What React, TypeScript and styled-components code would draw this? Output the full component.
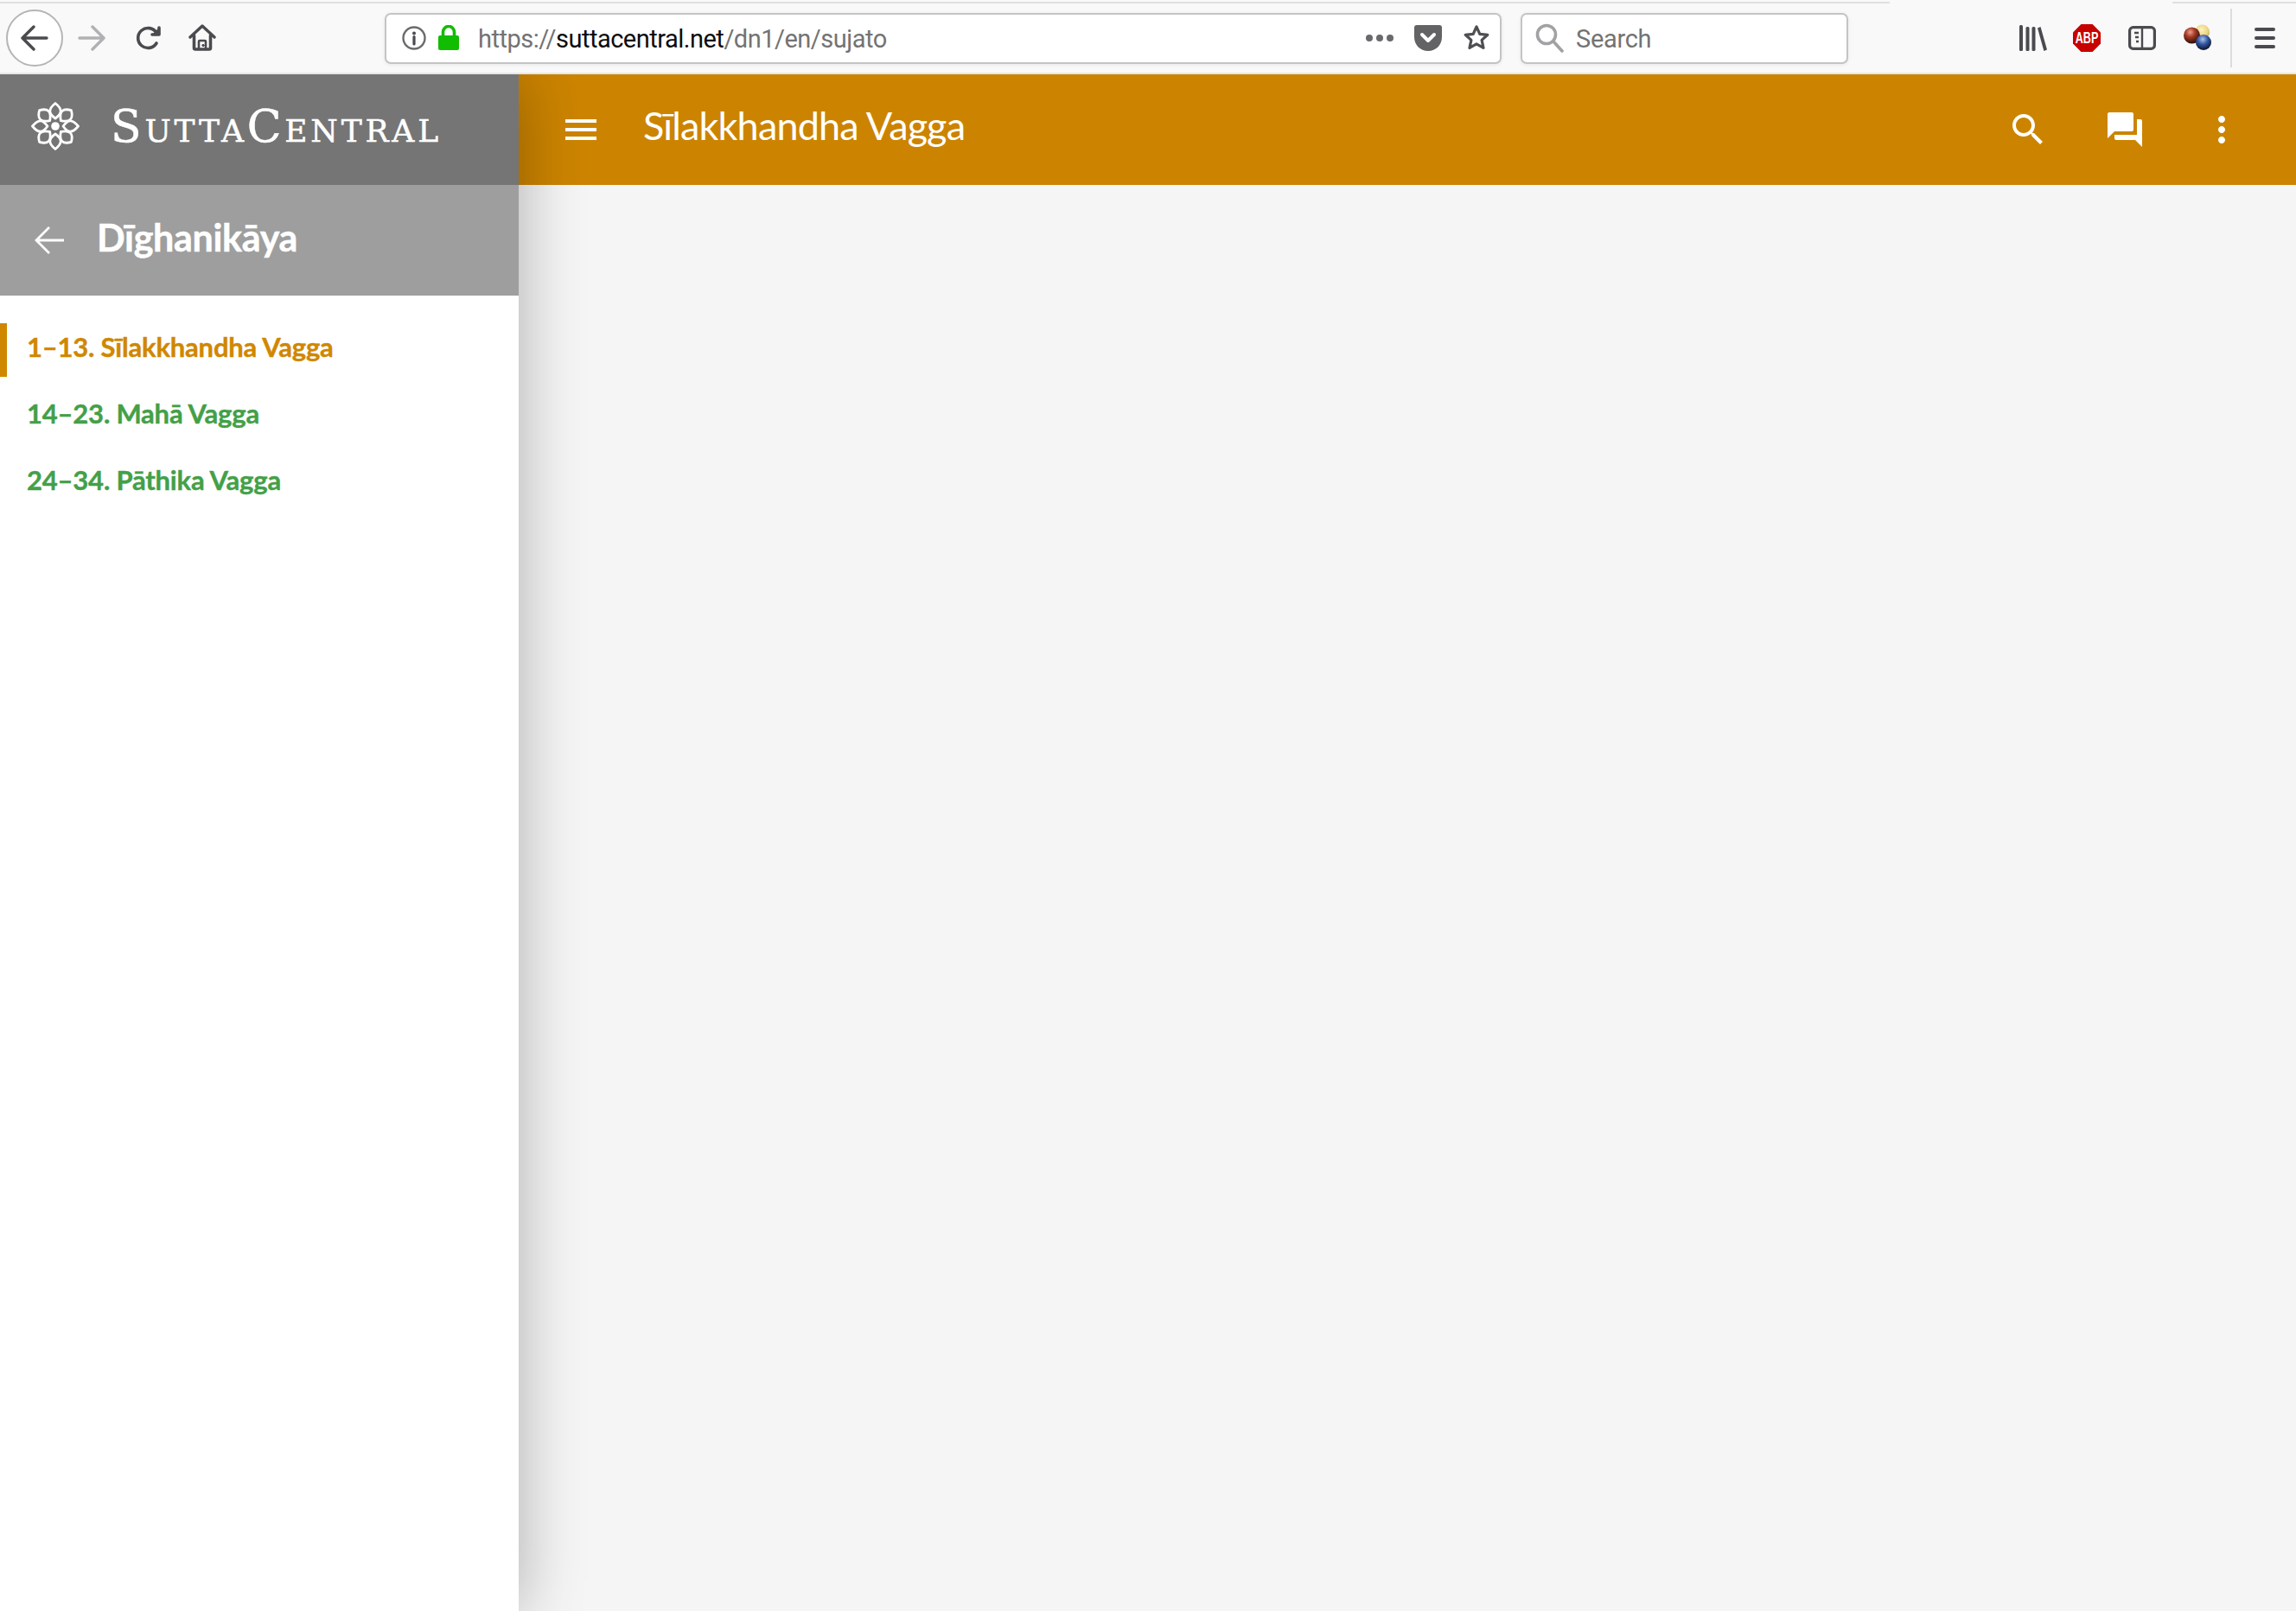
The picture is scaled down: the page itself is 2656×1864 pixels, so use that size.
import React from "react";
import { createGlobalStyle, styled } from "styled-components";

const GlobalStyle = createGlobalStyle`
  html, body {
    margin: 0;
    padding: 0;
    background: #f5f5f5;
  }
  * {
    box-sizing: border-box;
  }
`;

const diagonalPetals = [45, 135, 225, 315];
const cardinalPetals = [0, 90, 180, 270];
const menuItems = [
  { label: "1–13. Sīlakkhandha Vagga", active: true },
  { label: "14–23. Mahā Vagga", active: false },
  { label: "24–34. Pāthika Vagga", active: false },
];

const App = () => {
  return (
    <Page>
      <GlobalStyle />
      <BrowserChrome>
        <TopStrip>
          <TopLine $width={2186} />
          <TopLine $width={143} />
        </TopStrip>
        <ToolRow>
          <BackCircle>
            <svg width="32" height="30" viewBox="0 0 32 30" fill="none" stroke="#4a4a4f" strokeWidth="3.4" strokeLinecap="round" strokeLinejoin="round">
              <path d="M2 15h28M15 2L2 15l13 13" />
            </svg>
          </BackCircle>
          <ToolIcon $left={17}>
            <svg width="32" height="30" viewBox="0 0 32 30" fill="none" stroke="#b1b1b3" strokeWidth="3.4" strokeLinecap="round" strokeLinejoin="round">
              <path d="M2 15h28M17 2l13 13-13 13" />
            </svg>
          </ToolIcon>
          <ToolIcon $left={34}>
            <svg width="32" height="32" viewBox="0 0 32 32" fill="none" stroke="#4a4a4f" strokeWidth="3.6" strokeLinecap="round" strokeLinejoin="round">
              <path d="M25 22a11.5 11.5 0 1 1 0-12" />
              <path d="M28 4v8h-8" fill="#4a4a4f" />
            </svg>
          </ToolIcon>
          <ToolIcon $left={30}>
            <svg width="32" height="32" viewBox="0 0 32 32" fill="none" stroke="#4a4a4f" strokeWidth="3.4" strokeLinecap="round" strokeLinejoin="round">
              <path d="M2 15L16 2l14 13" />
              <path d="M6.5 13v14.5a1.500 1.500 0 0 0 1.500 1.500h16a1.500 1.500 0 0 0 1.500-1.500V13" strokeWidth="3.6" />
              <path d="M12 29v-9a1 1 0 0 1 1-1h6a1 1 0 0 1 1 1v9" strokeWidth="2.6" />
              <circle cx="17" cy="24.5" r="1.2" fill="#4a4a4f" strokeWidth="1" />
            </svg>
          </ToolIcon>
          <UrlBar>
            <FieldIcon $left={17}>
              <svg width="30" height="30" viewBox="0 0 30 30" fill="none">
                <circle cx="15" cy="15" r="12.5" stroke="#6b6b6b" strokeWidth="2.4" />
                <circle cx="15" cy="9.5" r="2" fill="#4a4a4f" />
                <path d="M15 13.5v8.5" stroke="#4a4a4f" strokeWidth="3.2" strokeLinecap="round" />
              </svg>
            </FieldIcon>
            <FieldIcon $left={12}>
              <svg width="26" height="30" viewBox="0 0 26 30" fill="none">
                <path d="M6.5 14V8a6.5 6.5 0 0 1 13 0v6" stroke="#12bc00" strokeWidth="3.6" />
                <rect x="1" y="12" width="24" height="17" rx="2" fill="#12bc00" />
              </svg>
            </FieldIcon>
            <UrlText>
              https://<UrlHost>suttacentral.net</UrlHost>/dn1/en/sujato
            </UrlText>
            <UrlActions>
              <svg width="32" height="8" viewBox="0 0 32 8" fill="#6a6a6e">
                <circle cx="4" cy="4" r="4" />
                <circle cx="16" cy="4" r="4" />
                <circle cx="28" cy="4" r="4" />
              </svg>
              <svg width="32" height="30" viewBox="0 0 32 30">
                <path d="M3 0h26a3 3 0 0 1 3 3v11c0 9-7 16-16 16S0 23 0 14V3a3 3 0 0 1 3-3z" fill="#636366" />
                <path d="M9 11l7 7 7-7" fill="none" stroke="#fff" strokeWidth="4" strokeLinecap="round" strokeLinejoin="round" />
              </svg>
              <svg width="32" height="32" viewBox="0 0 32 32" fill="none">
                <path d="M16 3l3.8 8.3 9 1-6.7 6.1 1.9 9L16 22.9 8 27.4l1.9-9-6.7-6.1 9-1z" stroke="#4f4f53" strokeWidth="3.2" strokeLinejoin="round" />
              </svg>
            </UrlActions>
          </UrlBar>
          <SearchBar>
            <svg width="34" height="34" viewBox="0 0 34 34" fill="none" stroke="#a2a2a4" strokeLinecap="round">
              <circle cx="13" cy="13" r="10.5" strokeWidth="3.6" />
              <path d="M21 21l10 11" strokeWidth="3.6" />
            </svg>
            <SearchText>Search</SearchText>
          </SearchBar>
          <ToolIcon $left={198}>
            <svg width="32" height="30" viewBox="0 0 32 30" fill="#4a4a4f">
              <rect x="0" y="0" width="4" height="30" rx="1.5" />
              <rect x="7.5" y="2" width="4" height="28" rx="1.5" />
              <rect x="14.5" y="2" width="4" height="28" rx="1.5" />
              <path d="M21 3.5l3.5-1.4L32 28.5 28.4 30z" />
            </svg>
          </ToolIcon>
          <ToolIcon $left={30}>
            <svg width="32" height="32" viewBox="0 0 32 32">
              <path d="M9.4 0h13.2L32 9.4v13.2L22.6 32H9.4L0 22.6V9.4z" fill="#c70000" />
              <AbpLabel transform="translate(16 22) scale(0.9 1.25)" textAnchor="middle">ABP</AbpLabel>
            </svg>
          </ToolIcon>
          <ToolIcon $left={32}>
            <svg width="32" height="28" viewBox="0 0 32 28" fill="none">
              <rect x="1.6" y="1.6" width="28.8" height="24.8" rx="4" stroke="#4a4a4f" strokeWidth="3.2" />
              <path d="M16 2v24" stroke="#4a4a4f" strokeWidth="2.4" />
              <path d="M7 8h5M8 13h4M9 18h3" stroke="#4a4a4f" strokeWidth="2.4" />
            </svg>
          </ToolIcon>
          <ToolIcon $left={32}>
            <svg width="32" height="32" viewBox="0 0 32 32">
              <defs>
                <radialGradient id="ballYellow" cx="0.45" cy="0.35" r="0.7">
                  <stop offset="0" stopColor="#fdf3c4" />
                  <stop offset="0.7" stopColor="#e9cf77" />
                  <stop offset="1" stopColor="#8f7a37" />
                </radialGradient>
                <radialGradient id="ballRed" cx="0.4" cy="0.3" r="0.75">
                  <stop offset="0" stopColor="#e8a08e" />
                  <stop offset="0.4" stopColor="#a53a25" />
                  <stop offset="1" stopColor="#1c0805" />
                </radialGradient>
                <radialGradient id="ballBlue" cx="0.45" cy="0.3" r="0.75">
                  <stop offset="0" stopColor="#a9c2ee" />
                  <stop offset="0.45" stopColor="#33559e" />
                  <stop offset="1" stopColor="#050a18" />
                </radialGradient>
              </defs>
              <circle cx="21.5" cy="9" r="8.5" fill="url(#ballYellow)" />
              <circle cx="9.5" cy="13" r="9.5" fill="url(#ballRed)" />
              <circle cx="23" cy="21" r="9" fill="url(#ballBlue)" />
            </svg>
          </ToolIcon>
          <Separator />
          <ToolIcon $left={26}>
            <svg width="24" height="24" viewBox="0 0 24 24" fill="#4a4a4f">
              <rect x="0" y="0" width="24" height="4" rx="2" />
              <rect x="0" y="10" width="24" height="4" rx="2" />
              <rect x="0" y="20" width="24" height="4" rx="2" />
            </svg>
          </ToolIcon>
        </ToolRow>
      </BrowserChrome>
      <Body>
        <Sidebar>
          <LogoBar>
            <LogoMark viewBox="0 0 56 56">
              {diagonalPetals.map((deg) => (
                <path key={deg} d="M28 19C19 13 19 7 28 2c9 5 9 11 0 17z" transform={`rotate(${deg} 28 28)`} />
              ))}
              {cardinalPetals.map((deg) => (
                <path key={deg} d="M28 19C19.5 13 20 8 28 1.500c8 6.500 8.500 11.500 0 17.500z" transform={`rotate(${deg} 28 28)`} />
              ))}
              <circle cx="28" cy="28" r="4.8" fill="#fff" stroke="none" />
            </LogoMark>
            <LogoText>SuttaCentral</LogoText>
          </LogoBar>
          <SubHeader>
            <svg width="34" height="34" viewBox="0 0 34 34" fill="none" stroke="#fff" strokeWidth="2.8">
              <path d="M2 17h32M17 2L2 17l15 15" />
            </svg>
            <SubTitle>Dīghanikāya</SubTitle>
          </SubHeader>
          <MenuList>
            {menuItems.map((item) => (
              <MenuItem key={item.label} $active={item.active}>
                {item.label}
              </MenuItem>
            ))}
          </MenuList>
        </Sidebar>
        <MainColumn>
          <AppBar>
            <AppIcon viewBox="0 0 24 24">
              <path d="M3 18h18v-2H3v2zm0-5h18v-2H3v2zm0-7v2h18V6H3z" />
            </AppIcon>
            <AppTitle>Sīlakkhandha Vagga</AppTitle>
            <AppActions>
              <AppIcon viewBox="0 0 24 24">
                <path d="M15.5 14h-.79l-.28-.27C15.41 12.59 16 11.11 16 9.5 16 5.91 13.09 3 9.5 3S3 5.91 3 9.5 5.91 16 9.5 16c1.61 0 3.09-.59 4.23-1.57l.27.28v.79l5 4.99L20.49 19l-4.99-5zm-6 0C7.01 14 5 11.99 5 9.5S7.01 5 9.5 5 14 7.01 14 9.5 11.99 14 9.5 14z" />
              </AppIcon>
              <AppIcon viewBox="0 0 24 24">
                <path d="M21 6h-2v9H6v2c0 .55.45 1 1 1h11l4 4V7c0-.55-.45-1-1-1zm-4 6V3c0-.55-.45-1-1-1H3c-.55 0-1 .45-1 1v14l4-4h10c.55 0 1-.45 1-1z" />
              </AppIcon>
              <AppIcon viewBox="0 0 24 24">
                <path d="M12 8c1.1 0 2-.9 2-2s-.9-2-2-2-2 .9-2 2 .9 2 2 2zm0 2c-1.1 0-2 .9-2 2s.9 2 2 2 2-.9 2-2-.9-2-2-2zm0 6c-1.1 0-2 .9-2 2s.9 2 2 2 2-.9 2-2-.9-2-2-2z" />
              </AppIcon>
            </AppActions>
          </AppBar>
        </MainColumn>
      </Body>
    </Page>
  );
};

const Page = styled.div`
  width: 2656px;
  height: 1864px;
  display: flex;
  flex-direction: column;
  overflow: hidden;
  background: #f5f5f5;
`;
const BrowserChrome = styled.div`
  height: 86px;
  flex: none;
  position: relative;
  z-index: 2;
  background: #f9f9fa;
  border-bottom: 2px solid #e6e6e6;
`;
const TopStrip = styled.div`
  height: 4px;
  padding-top: 2px;
  display: flex;
  justify-content: space-between;
`;
const TopLine = styled.div<{ $width: number }>`
  width: ${(p) => p.$width}px;
  height: 2px;
  background: #e0e0e1;
`;
const ToolRow = styled.div`
  height: 80px;
  padding-left: 7px;
  display: flex;
  align-items: center;
`;
const BackCircle = styled.div`
  width: 66px;
  height: 66px;
  flex: none;
  display: flex;
  align-items: center;
  justify-content: center;
  background: #fff;
  border: 2px solid #b5b5b5;
  border-radius: 50%;
`;
const ToolIcon = styled.div<{ $left: number }>`
  margin-left: ${(p) => p.$left}px;
  display: flex;
  flex: none;
`;
const Field = styled.div`
  height: 59px;
  flex: none;
  display: flex;
  align-items: center;
  background: #fff;
  border: 2px solid #c4c4c4;
  border-radius: 7px;
  box-shadow: 0 1px 4px rgba(0, 0, 0, 0.08);
`;
const UrlBar = styled(Field)`
  width: 1292px;
  margin-left: 195px;
`;
const SearchBar = styled(Field)`
  width: 379px;
  margin-left: 22px;
  padding-left: 15px;
`;
const FieldIcon = styled.div<{ $left: number }>`
  margin-left: ${(p) => p.$left}px;
  display: flex;
`;
const UrlText = styled.div`
  margin-left: 21px;
  padding-top: 2px;
  font-family: Roboto, "Liberation Sans", sans-serif;
  font-size: 29px;
  letter-spacing: -0.5px;
  color: #737373;
  white-space: nowrap;
`;
const UrlHost = styled.span`
  color: #0c0c0d;
`;
const UrlActions = styled.div`
  margin-left: auto;
  padding-right: 11px;
  display: flex;
  align-items: center;
  gap: 24px;
`;
const SearchText = styled.div`
  margin-left: 13px;
  padding-top: 2px;
  font-family: Roboto, "Liberation Sans", sans-serif;
  font-size: 29px;
  letter-spacing: -0.3px;
  color: #737373;
`;
const AbpLabel = styled.text`
  font-family: "Liberation Sans", Arial, sans-serif;
  font-size: 14px;
  font-weight: 700;
  fill: #fff;
`;
const Separator = styled.div`
  width: 2px;
  height: 68px;
  margin-left: 22px;
  background: #dcdcdc;
`;
const Body = styled.div`
  flex: 1;
  display: flex;
  min-height: 0;
`;
const Sidebar = styled.div`
  width: 600px;
  flex: none;
  display: flex;
  flex-direction: column;
  background: #fff;
  box-shadow: 0 0 70px rgba(0, 0, 0, 0.3);
  position: relative;
  z-index: 1;
`;
const LogoBar = styled.div`
  height: 128px;
  padding-left: 36px;
  display: flex;
  align-items: center;
  background: #757575;
`;
const LogoMark = styled.svg`
  width: 56px;
  height: 56px;
  flex: none;
  margin-bottom: 8px;
  fill: #757575;
  stroke: #fff;
  stroke-width: 2.8;
  stroke-linejoin: round;
`;
const LogoText = styled.div`
  margin-left: 36px;
  padding-bottom: 9px;
  font-family: "DejaVu Serif", serif;
  font-variant: small-caps;
  font-size: 52px;
  letter-spacing: 3.8px;
  -webkit-text-stroke: 0.5px #fff;
  color: #fff;
  white-space: nowrap;
`;
const SubHeader = styled.div`
  height: 128px;
  padding-left: 40px;
  display: flex;
  align-items: center;
  background: #9e9e9e;
`;
const SubTitle = styled.div`
  margin-left: 38px;
  padding-bottom: 8px;
  font-family: Lato, "Noto Sans", sans-serif;
  font-size: 43px;
  font-weight: 700;
  letter-spacing: -0.3px;
  -webkit-text-stroke: 0.5px #fff;
  color: #fff;
`;
const MenuList = styled.div`
  padding-top: 32px;
  display: flex;
  flex-direction: column;
  gap: 15px;
`;
const MenuItem = styled.div<{ $active: boolean }>`
  height: 62px;
  padding: 0 0 8px ${(p) => (p.$active ? 23 : 31)}px;
  display: flex;
  align-items: center;
  border-left: ${(p) => (p.$active ? "8px solid #d08700" : "none")};
  font-family: Lato, "Noto Sans", sans-serif;
  font-size: 31px;
  font-weight: 700;
  letter-spacing: -0.2px;
  -webkit-text-stroke: 0.4px currentColor;
  color: ${(p) => (p.$active ? "#d08700" : "#43a047")};
`;
const MainColumn = styled.div`
  flex: 1;
  min-width: 0;
`;
const AppBar = styled.div`
  height: 128px;
  padding: 0 62px 0 48px;
  display: flex;
  align-items: center;
  background: #cc8400;
`;
const AppIcon = styled.svg`
  width: 48px;
  height: 48px;
  flex: none;
  fill: #fff;
`;
const AppTitle = styled.div`
  margin-left: 48px;
  padding-bottom: 10px;
  font-family: Lato, "Noto Sans", sans-serif;
  font-size: 45px;
  letter-spacing: -0.85px;
  color: #fff;
`;
const AppActions = styled.div`
  margin-left: auto;
  display: flex;
  gap: 64px;
`;

export default App;
